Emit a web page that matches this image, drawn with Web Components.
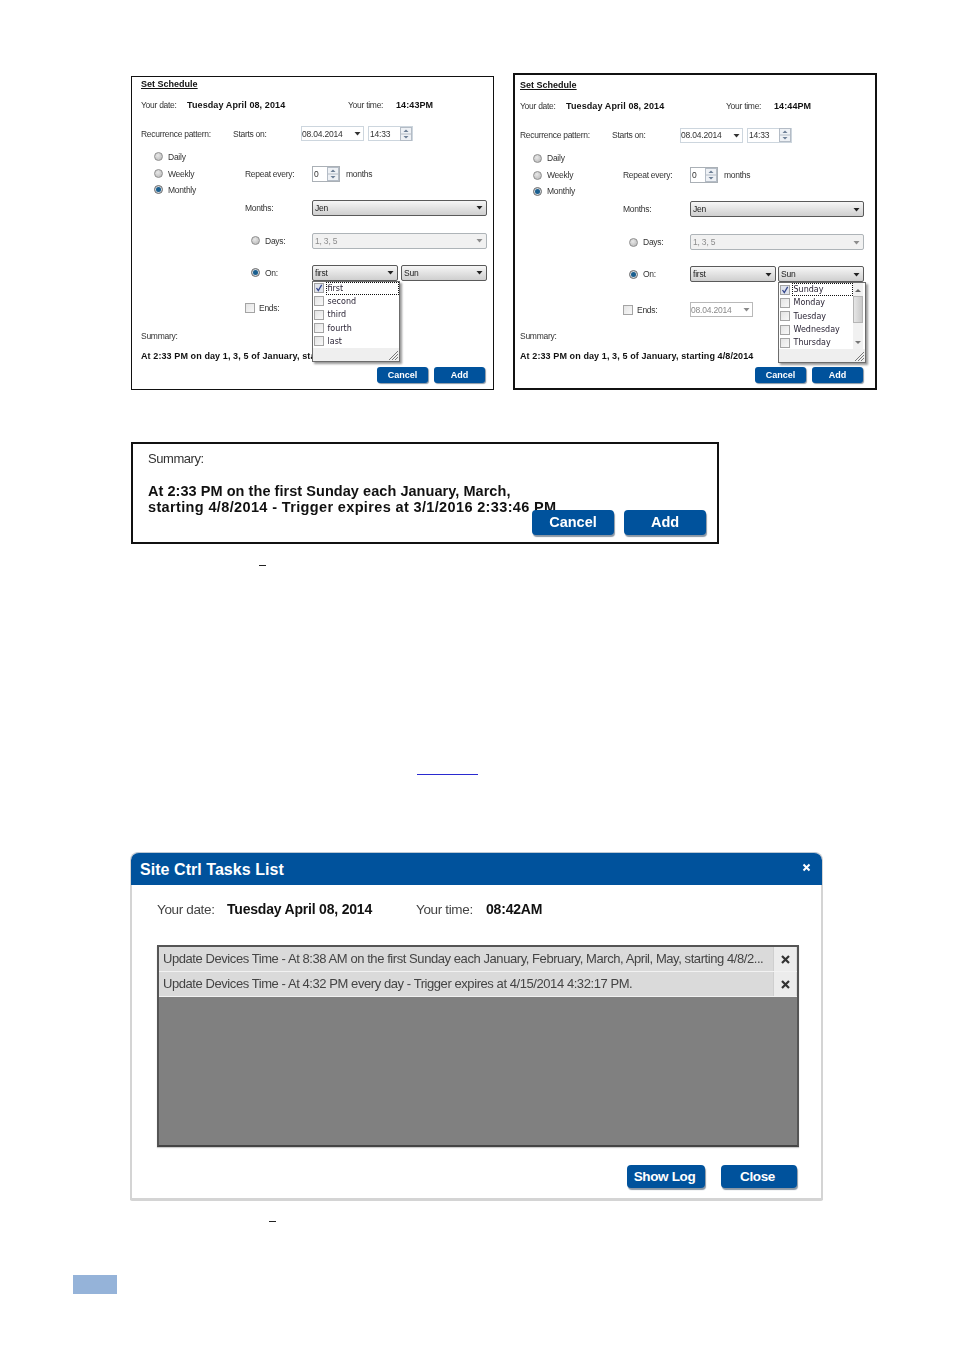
<!DOCTYPE html>
<html lang="en"><head><meta charset="utf-8"><title>Schedule</title>
<style>
html,body{margin:0;background:#fff}
body{font-family:"Liberation Sans",Arial,sans-serif;color:#1c1c1c}
#page{width:954px;height:1350px;overflow:hidden}
.top{display:flex;align-items:flex-end;gap:19px;margin:73px 0 0 131px}
sum-panel{margin:52px 0 0 131px}
.m1{margin:21px 0 0 259px}
.lnk{margin:208px 0 0 417px}
task-dialog{margin:77px 0 0 130px}
.m2{margin:20px 0 0 269px}
.foot{margin:53px 0 0 73px}
</style></head><body>
<div id="page">
  <div class="top">
    <sched-panel time="14:43PM">
      <check-popup slot="first-popup">
        <check-item checked focus>first</check-item><check-item>second</check-item><check-item>third</check-item><check-item>fourth</check-item><check-item>last</check-item>
      </check-popup>
    </sched-panel>
    <sched-panel variant="b" time="14:44PM">
      <date-box slot="ends-date" disabled>08.04.2014</date-box>
      <check-popup slot="sun-popup" scroll>
        <check-item checked focus>Sunday</check-item><check-item>Monday</check-item><check-item>Tuesday</check-item><check-item>Wednesday</check-item><check-item>Thursday</check-item>
      </check-popup>
    </sched-panel>
  </div>
  <sum-panel></sum-panel>
  <doc-mark class="m1" w="7" h="1" c="#222"></doc-mark>
  <doc-mark class="lnk" w="61" h="1" c="#2a2ad0"></doc-mark>
  <task-dialog></task-dialog>
  <doc-mark class="m2" w="7" h="1" c="#222"></doc-mark>
  <doc-mark class="foot" w="44" h="19" c="#95b3d9"></doc-mark>
</div>
<script>
function def(name, css, html, init){
  const t=document.createElement('template');
  t.innerHTML='<style>'+css+'</style>'+html;
  customElements.define(name,class extends HTMLElement{
    connectedCallback(){
      if(this.shadowRoot)return;
      const r=this.attachShadow({mode:'open'});
      r.appendChild(t.content.cloneNode(true));
      if(init)init(this,r);
    }
  });
}
const ARROW='<svg width="7" height="5" viewBox="0 0 7 5"><path d="M0.5 1H6.5L3.5 4.5Z" fill="currentColor"/></svg>';
const SPIN='<svg width="12" height="14" viewBox="0 0 12 14"><rect x=".5" y=".5" width="11" height="13" fill="#eef1f5" stroke="#b4bcc6"/><path d="M1 7H11" stroke="#b4bcc6"/><path d="M3.5 5H8.5L6 2.5Z" fill="#6d7f96"/><path d="M3.5 9H8.5L6 11.5Z" fill="#6d7f96"/></svg>';

def('doc-mark',':host{display:block;background:var(--c);width:var(--w);height:var(--h)}','',(h)=>{
  h.style.setProperty('--c',h.getAttribute('c'));h.style.setProperty('--w',h.getAttribute('w')+'px');h.style.setProperty('--h',h.getAttribute('h')+'px');
});

def('ui-btn',`:host{display:inline-flex;align-items:center;justify-content:center;box-sizing:border-box;width:51px;height:16px;background:#00529c;color:#fff;font:bold 9px "Liberation Sans",sans-serif;border-radius:3px;box-shadow:1px 1px 1px #8a97a5}
:host([big]){width:82px;height:25px;font-size:14.5px;border-radius:4px;box-shadow:1px 2px 1px #8a97a5;padding-bottom:1px}
:host([mid]){height:23px;font-size:13.5px;letter-spacing:-.35px;border-radius:4px;box-shadow:1px 2px 1px #8a97a5;padding-right:3px}`,'<slot></slot>');

def('ui-radio',`:host{display:flex;align-items:center;gap:5px;font:8.5px "Liberation Sans",sans-serif;color:#333;height:100%;letter-spacing:-.25px}
i{width:9px;height:9px;border-radius:50%;border:1px solid #8e8e8e;box-sizing:border-box;background:radial-gradient(circle at 40% 35%,#e8e8e8,#b4b4b4);display:flex;align-items:center;justify-content:center;flex:none}
:host([on]) i{background:#cfd6dc;border-color:#6c6c6c}
:host([on]) i::after{content:"";width:5px;height:5px;border-radius:50%;background:#1a5f8f}`,'<i></i><span><slot></slot></span>');

def('ui-select',`:host{display:block;position:relative;height:16px;flex:1;font:8.5px "Liberation Sans",sans-serif;color:#222;box-sizing:border-box;letter-spacing:-.2px}
.b{box-sizing:border-box;height:100%;border:1px solid #5a5a5a;border-radius:2px;background:linear-gradient(#f6f6f6,#cfcfcf);display:flex;align-items:center;justify-content:space-between;padding:0 3px 0 2px}
:host([disabled]) .b{background:#f1f1f1;border-color:#aeb4b8;color:#8c8c8c}
svg{display:block}`,'<div class="b"><span><slot></slot></span>'+ARROW+'</div><slot name="popup"></slot>');

def('date-box',`:host{display:block;box-sizing:border-box;width:63px;height:15px;border:1px solid #cdd6de;font:8.5px "Liberation Sans",sans-serif;color:#333;padding:0 2px 0 0;letter-spacing:-.2px}
:host([disabled]){border-color:#b9b9b9;color:#8a8a8a}
.w{display:flex;height:100%;align-items:center;justify-content:space-between}`,'<div class="w"><span><slot></slot></span>'+ARROW+'</div>');

def('spin-box',`:host{display:block;box-sizing:border-box;width:var(--sw,45px);height:15px;border:1px solid #cdd6de;font:8.5px "Liberation Sans",sans-serif;color:#333;padding:0;letter-spacing:-.2px}
:host([dark]){border-color:#aab0b6;height:16px}
.w{display:flex;height:100%;align-items:center;justify-content:space-between;padding-left:1px}
svg{display:block}`,'<div class="w"><span><slot></slot></span>'+SPIN+'</div>');

def('check-box',`:host{display:block;box-sizing:border-box;width:10px;height:10px;border:1px solid #a4a4a4;background:linear-gradient(135deg,#e4e4e4,#f8f8f8);flex:none;position:relative}
svg{display:none;position:absolute;left:0;top:0}
:host([checked]){background:#dfe3ec}
:host([checked]) svg{display:block}`,'<svg width="8" height="8" viewBox="0 0 8 8"><path d="M1.5 4L3.3 6.6L6.7 .8" fill="none" stroke="#34468c" stroke-width="1.3"/></svg>');

def('check-item',`:host{display:flex;align-items:center;gap:1.5px;height:13.3px;font:8px "DejaVu Sans",sans-serif;color:#2b2536;box-sizing:border-box;padding-left:1px}
span{flex:1;box-sizing:border-box;height:13px;line-height:12px;padding-left:1px;border:1px dotted transparent;white-space:nowrap}
:host([focus]) span{border-color:#111}`,'<check-box></check-box><span><slot></slot></span>',(h,r)=>{ if(h.hasAttribute('checked')) r.querySelector('check-box').setAttribute('checked',''); });

def('check-popup',`:host{position:absolute;left:0;top:100%;z-index:5;width:88px;height:81px;box-sizing:border-box;background:#fff;border:1px solid #6c6c6c;box-shadow:2px 2px 2px #9a9a9a;display:flex;flex-direction:column;letter-spacing:0}
.m{flex:1;display:flex;min-height:0}
.l{flex:1;min-width:0}
.s{display:none;width:10px;margin-right:2px;background:#f1f1f1;flex-direction:column;align-items:center;justify-content:space-between;padding:6px 0 5px;box-sizing:border-box;position:relative}
:host([scroll]) .s{display:flex}
.s i{position:absolute;left:0;right:0;top:13px;height:27px;background:linear-gradient(90deg,#e6e6e6,#c9c9c9);border:1px solid #b5b5b5;box-sizing:border-box}
.s b{width:0;height:0;border:3px solid transparent}
.s b:first-child{border-bottom-color:#666;border-top:0}
.s b:last-child{border-top-color:#777;border-bottom:0}
.g{height:13px;background:#efefef;display:flex;justify-content:flex-end;align-items:flex-end}
svg{display:block}`,'<div class="m"><div class="l"><slot></slot></div><div class="s"><b></b><i></i><b></b></div></div><div class="g"><svg width="11" height="11" viewBox="0 0 11 11"><path d="M1 10L10 1M4 10L10 4M7 10L10 7" stroke="#777" stroke-width="1"/></svg></div>');

def('sched-panel',`:host{display:block;box-sizing:border-box;width:363px;height:314px;border:1.5px solid #111;background:#fff;padding:0 0 0 9px;--c1:104px;--rp:8px;--sgap:14px;--gg:3px;--pt:.5px;--ww:175px;font:8.5px "Liberation Sans",sans-serif;letter-spacing:-.28px;color:#333;filter:blur(.25px)}
:host([variant=b]){width:364px;height:317px;border-width:2px;padding-left:5px;--c1:103px;--rp:12px;--sgap:13px;--gg:2px;--pt:4px;--ww:174px}
.t{margin-top:var(--pt);height:12px;font:bold 9px/12px "Liberation Sans",sans-serif;letter-spacing:.01px;text-decoration:underline;color:#111}
.d{margin-top:8px;height:14px;display:grid;grid-template-columns:46px 161px 48px auto;align-items:center}
:host([variant=b]) .d{grid-template-columns:46px 160px 48px auto}
b{font:bold 9px "Liberation Sans",sans-serif;letter-spacing:.1px;color:#111;white-space:nowrap}
.rec{margin-top:14px;height:16px;display:grid;grid-template-columns:92px 68px 63px 4px auto;align-items:center}
.g{display:grid;grid-template-columns:var(--c1) 67px var(--ww);align-items:center}
.rd{padding-left:13px;box-sizing:border-box;height:14px}
.daily{margin-top:8px;height:14px}
.wk{margin-top:2px;height:16px}
.mo{margin-top:1px;height:14px}
.mon{margin-top:3px;height:16px}
.days{margin-top:17px;height:16px}
.on{margin-top:16px;height:16px}
.ends{margin-top:20px;height:14px}
.in{padding-left:6px;box-sizing:border-box;height:14px}
.sel2{display:flex;gap:var(--gg)}
.rep{display:flex;align-items:center;gap:6px;--sw:28px}
.e{display:flex;align-items:center;gap:4px}
.su{margin-top:var(--sgap);height:14px;line-height:14px}
.bd{margin-top:6px;height:14px;line-height:14px;white-space:nowrap}
.btns{margin-top:4px;display:flex;justify-content:flex-end;gap:6px;padding-right:var(--rp);letter-spacing:0}`,
`<div class="t">Set Schedule</div>
<div class="d"><span>Your date:</span><b>Tuesday April 08, 2014</b><span>Your time:</span><b id="tm"></b></div>
<div class="rec"><span>Recurrence pattern:</span><span>Starts on:</span><date-box>08.04.2014</date-box><i></i><spin-box>14:33</spin-box></div>
<div class="daily"><div class="rd"><ui-radio>Daily</ui-radio></div></div>
<div class="g wk"><div class="rd"><ui-radio>Weekly</ui-radio></div><span>Repeat every:</span><div class="rep"><spin-box dark>0</spin-box><span>months</span></div></div>
<div class="mo"><div class="rd"><ui-radio on>Monthly</ui-radio></div></div>
<div class="g mon"><span></span><span>Months:</span><ui-select>Jen</ui-select></div>
<div class="g days"><span></span><div class="in"><ui-radio>Days:</ui-radio></div><ui-select disabled>1, 3, 5</ui-select></div>
<div class="g on"><span></span><div class="in"><ui-radio on>On:</ui-radio></div><div class="sel2"><ui-select>first<slot name="first-popup" slot="popup"></slot></ui-select><ui-select>Sun<slot name="sun-popup" slot="popup"></slot></ui-select></div></div>
<div class="g ends"><span></span><div class="e"><check-box></check-box><span>Ends:</span></div><div><slot name="ends-date"></slot></div></div>
<div class="su">Summary:</div>
<div class="bd"><b>At 2:33 PM on day 1, 3, 5 of January, starting 4/8/2014</b></div>
<div class="btns"><ui-btn>Cancel</ui-btn><ui-btn>Add</ui-btn></div>`,
(h,r)=>{r.getElementById('tm').textContent=h.getAttribute('time');});

def('sum-panel',`:host{display:block;position:relative;box-sizing:border-box;width:588px;height:102px;border:2px solid #111;background:#fff;padding:6px 0 0 15px;font:13px "Liberation Sans",sans-serif;color:#333;filter:blur(.3px)}
.s{height:17px;line-height:17px;letter-spacing:-.45px}
p{margin:16px 0 0;font:bold 14.5px/16px "Liberation Sans",sans-serif;color:#111;white-space:nowrap}
.a{letter-spacing:.05px}.c{letter-spacing:.36px}
.b{position:absolute;right:11px;bottom:7px;display:flex;gap:10px}`,
`<div class="s">Summary:</div><p><span class="a">At 2:33 PM on the first Sunday each January, March,</span><br><span class="c">starting 4/8/2014 - Trigger expires at 3/1/2016 2:33:46 PM</span></p><div class="b"><ui-btn big>Cancel</ui-btn><ui-btn big>Add</ui-btn></div>`);

def('task-row',`:host{display:flex;height:25px;box-sizing:border-box;background:#dadada;border-bottom:1px solid #f2f2f2;font:13px "Liberation Sans",sans-serif;color:#444}
.t{flex:1;padding-left:4px;line-height:24px;white-space:nowrap;overflow:hidden;letter-spacing:-.43px}
.x{width:22px;background:#ececec;display:flex;align-items:center;justify-content:center;border-left:1px solid #cfcfcf;margin-right:1px}
svg{display:block}`,'<div class="t"><slot></slot></div><div class="x"><svg width="9" height="9" viewBox="0 0 9 9"><path d="M1 1L8 8M8 1L1 8" stroke="#333" stroke-width="2.2"/></svg></div>');

def('task-dialog',`:host{display:block;width:693px;height:349px;box-sizing:border-box;background:#fff;border:solid #d4d4d4;border-width:0 2px 3px 2px;border-radius:8px 8px 2px 2px;filter:blur(.35px);font:13.5px "Liberation Sans",sans-serif;color:#444}
.h{height:33px;margin:0 -1px;background:#00529c;border-top:1px solid #bcc8d4;border-radius:8px 8px 0 0;color:#fff;display:flex;align-items:center;justify-content:space-between;padding:1px 11px 0 9px;box-sizing:border-box;font:bold 16px "Liberation Sans",sans-serif;letter-spacing:.05px}
.h svg{display:block;margin-top:-5px}
.i{display:grid;grid-template-columns:70px 189px 70px auto;margin:15px 0 0 25px;height:18px;align-items:center;letter-spacing:-.35px}
.i b{font:bold 14px "Liberation Sans",sans-serif;color:#111;letter-spacing:-.2px}
.l{margin:27px 0 0 25px;width:642px;height:202px;box-sizing:border-box;border:2px solid #555;border-bottom-color:#444;background:#808080;box-shadow:0 1px 1px #ccc}
.b{display:flex;justify-content:flex-end;gap:16px;margin:18px 24px 0 0}
.b ui-btn:first-child{width:78px}.b ui-btn:last-child{width:76px}`,
`<div class="h"><span>Site Ctrl Tasks List</span><svg width="9" height="9" viewBox="0 0 9 9"><path d="M1.5 1.5L7.5 7.5M7.5 1.5L1.5 7.5" stroke="#fff" stroke-width="2"/></svg></div>
<div class="i"><span>Your date:</span><b>Tuesday April 08, 2014</b><span>Your time:</span><b>08:42AM</b></div>
<div class="l"><task-row>Update Devices Time - At 8:38 AM on the first Sunday each January, February, March, April, May, starting 4/8/2...</task-row><task-row>Update Devices Time - At 4:32 PM every day - Trigger expires at 4/15/2014 4:32:17 PM.</task-row></div>
<div class="b"><ui-btn mid>Show Log</ui-btn><ui-btn mid>Close</ui-btn></div>`);
</script>
</body></html>
